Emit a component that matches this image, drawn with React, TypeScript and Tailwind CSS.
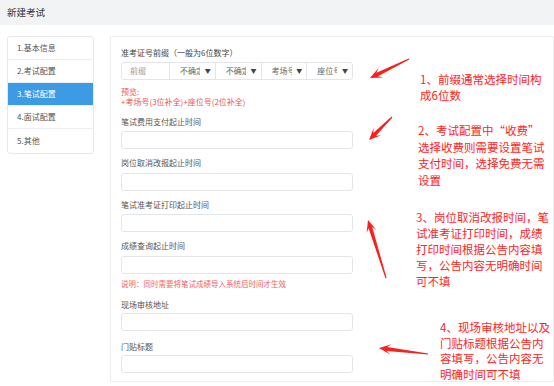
const cjk = { fontFamily: '"Noto Sans CJK SC", "Noto Sans", sans-serif' };

type Pt = [number, number];

function arrowPoints(tail: Pt, tip: Pt) {
  const dx = tip[0] - tail[0];
  const dy = tip[1] - tail[1];
  const len = Math.hypot(dx, dy);
  const ux = dx / len;
  const uy = dy / len;
  const nx = -uy;
  const ny = ux;
  const at = (d: number, w: number): string =>
    `${(tip[0] - ux * d + nx * w).toFixed(1)},${(tip[1] - uy * d + ny * w).toFixed(1)}`;
  return [
    `${tail[0] + nx * 0.6},${tail[1] + ny * 0.6}`,
    at(8, 1.9),
    at(12, 5.2),
    `${tip[0]},${tip[1]}`,
    at(12, -5.2),
    at(8, -1.9),
    `${tail[0] - nx * 0.6},${tail[1] - ny * 0.6}`,
  ].join(" ");
}

const arrows: [Pt, Pt][] = [
  [[409, 59], [370, 78]],
  [[392, 117], [369, 140]],
  [[386, 278], [368, 220]],
  [[428, 354], [379, 348]],
];

const notes: { left: string; top: string; lh: string; lines: string[] }[] = [
  { left: "left-[420px]", top: "top-[71px]", lh: "leading-[16px]", lines: ["1、前缀通常选择时间构", "成6位数"] },
  {
    left: "left-[418px]",
    top: "top-[122px]",
    lh: "leading-[16.5px]",
    lines: ["2、考试配置中“收费”", "选择收费则需要设置笔试", "支付时间，选择免费无需", "设置"],
  },
  {
    left: "left-[416px]",
    top: "top-[209px]",
    lh: "leading-[16px]",
    lines: ["3、岗位取消改报时间，笔", "试准考证打印时间，成绩", "打印时间根据公告内容填", "写，公告内容无明确时间", "可不填"],
  },
  {
    left: "left-[440px]",
    top: "top-[320px]",
    lh: "leading-[15.5px]",
    lines: ["4、现场审核地址以及", "门贴标题根据公告内", "容填写，公告内容无", "明确时间可不填"],
  },
];

const steps = ["1.基本信息", "2.考试配置", "3.笔试配置", "4.面试配置", "5.其他"];

function Field({ label, top = "mt-[9px]", gap = "mt-[4px]" }: { label: string; top?: string; gap?: string }) {
  return (
    <div className={top}>
      <div className="h-[10px] leading-[10px] text-[8px] text-[#555]">{label}</div>
      <div className={`${gap} h-[18px] rounded-[3px] border border-[#e3e5ea] bg-white`} />
    </div>
  );
}

function Select({ text }: { text: string }) {
  return (
    <div className="flex h-full flex-1 items-center border-l border-[#e3e5ea] pl-[10px] pr-[4px]">
      <span className="w-[20px] overflow-hidden whitespace-nowrap text-[8px] text-[#666]">{text}</span>
      <span className="ml-auto text-[6px] leading-none text-[#444]">▼</span>
    </div>
  );
}

export default function App() {
  return (
    <div className="relative h-[386px] w-[554px] overflow-hidden bg-white" style={cjk}>
      <div className="flex h-[25px] items-center bg-[#f2f3f5] px-[7px] text-[9.5px] text-[#333]">
        新建考试
      </div>

      <div className="flex pt-[11px]">
        {/* steps */}
        <div className="ml-[7px] h-[118px] w-[87px] overflow-hidden rounded-[3px] border border-[#e6e8ec]">
          {steps.map((s, i) => (
            <div
              key={s}
              className={`flex h-[23px] items-center pl-[9px] text-[8px] ${
                i === 2 ? "bg-[#3d9be6] text-white" : "text-[#555]"
              } ${i < steps.length - 1 ? "border-b border-[#eceef1]" : ""}`}
            >
              {s}
            </div>
          ))}
        </div>

        {/* form card */}
        <div className="ml-[16px] flex-1 border border-[#eceef1] pl-[10px] pt-[11px] pb-[8px]">
          <div className="w-[232px]">
            <div className="h-[10px] leading-[10px] text-[8px] text-[#444]">准考证号前缀（一般为6位数字）</div>
            <div className="mt-[4px] flex h-[18px] items-center rounded-[3px] border border-[#e3e5ea]">
              <div className="flex h-full w-[47px] items-center pl-[8px] text-[8px] text-[#999]">前缀</div>
              <Select text="不确定" />
              <Select text="不确定" />
              <Select text="考场号" />
              <Select text="座位号" />
            </div>
            <div className="mt-[7px] text-[8px] leading-[10px] text-[#f55252]">
              <div>预览:</div>
              <div>+考场号(3位补全)+座位号(2位补全)</div>
            </div>

            <Field label="笔试费用支付起止时间" top="mt-[10px]" />
            <Field label="岗位取消改报起止时间" gap="mt-[5px]" />
            <Field label="笔试准考证打印起止时间" />
            <Field label="成绩查询起止时间" gap="mt-[5px]" />
            <div className="mt-[5px] h-[10px] leading-[10px] text-[7.5px] text-[#f56262]">
              说明：同时需要将笔试成绩导入系统后时间才生效
            </div>
            <Field label="现场审核地址" top="mt-[11px]" gap="mt-[3px]" />
            <Field label="门贴标题" top="mt-[11px]" gap="mt-[3px]" />
          </div>
        </div>
      </div>

      {/* annotations */}
      {notes.map((n, i) => (
        <div
          key={i}
          className={`absolute ${n.left} ${n.top} ${n.lh} whitespace-nowrap text-[11.5px] text-[#ff2424]`}
        >
          {n.lines.map((l) => (
            <div key={l}>{l}</div>
          ))}
        </div>
      ))}

      <svg className="pointer-events-none absolute left-0 top-0" width="554" height="386">
        {arrows.map(([t, h], i) => (
          <polygon key={i} points={arrowPoints(t, h)} fill="#f5221e" />
        ))}
      </svg>
    </div>
  );
}
